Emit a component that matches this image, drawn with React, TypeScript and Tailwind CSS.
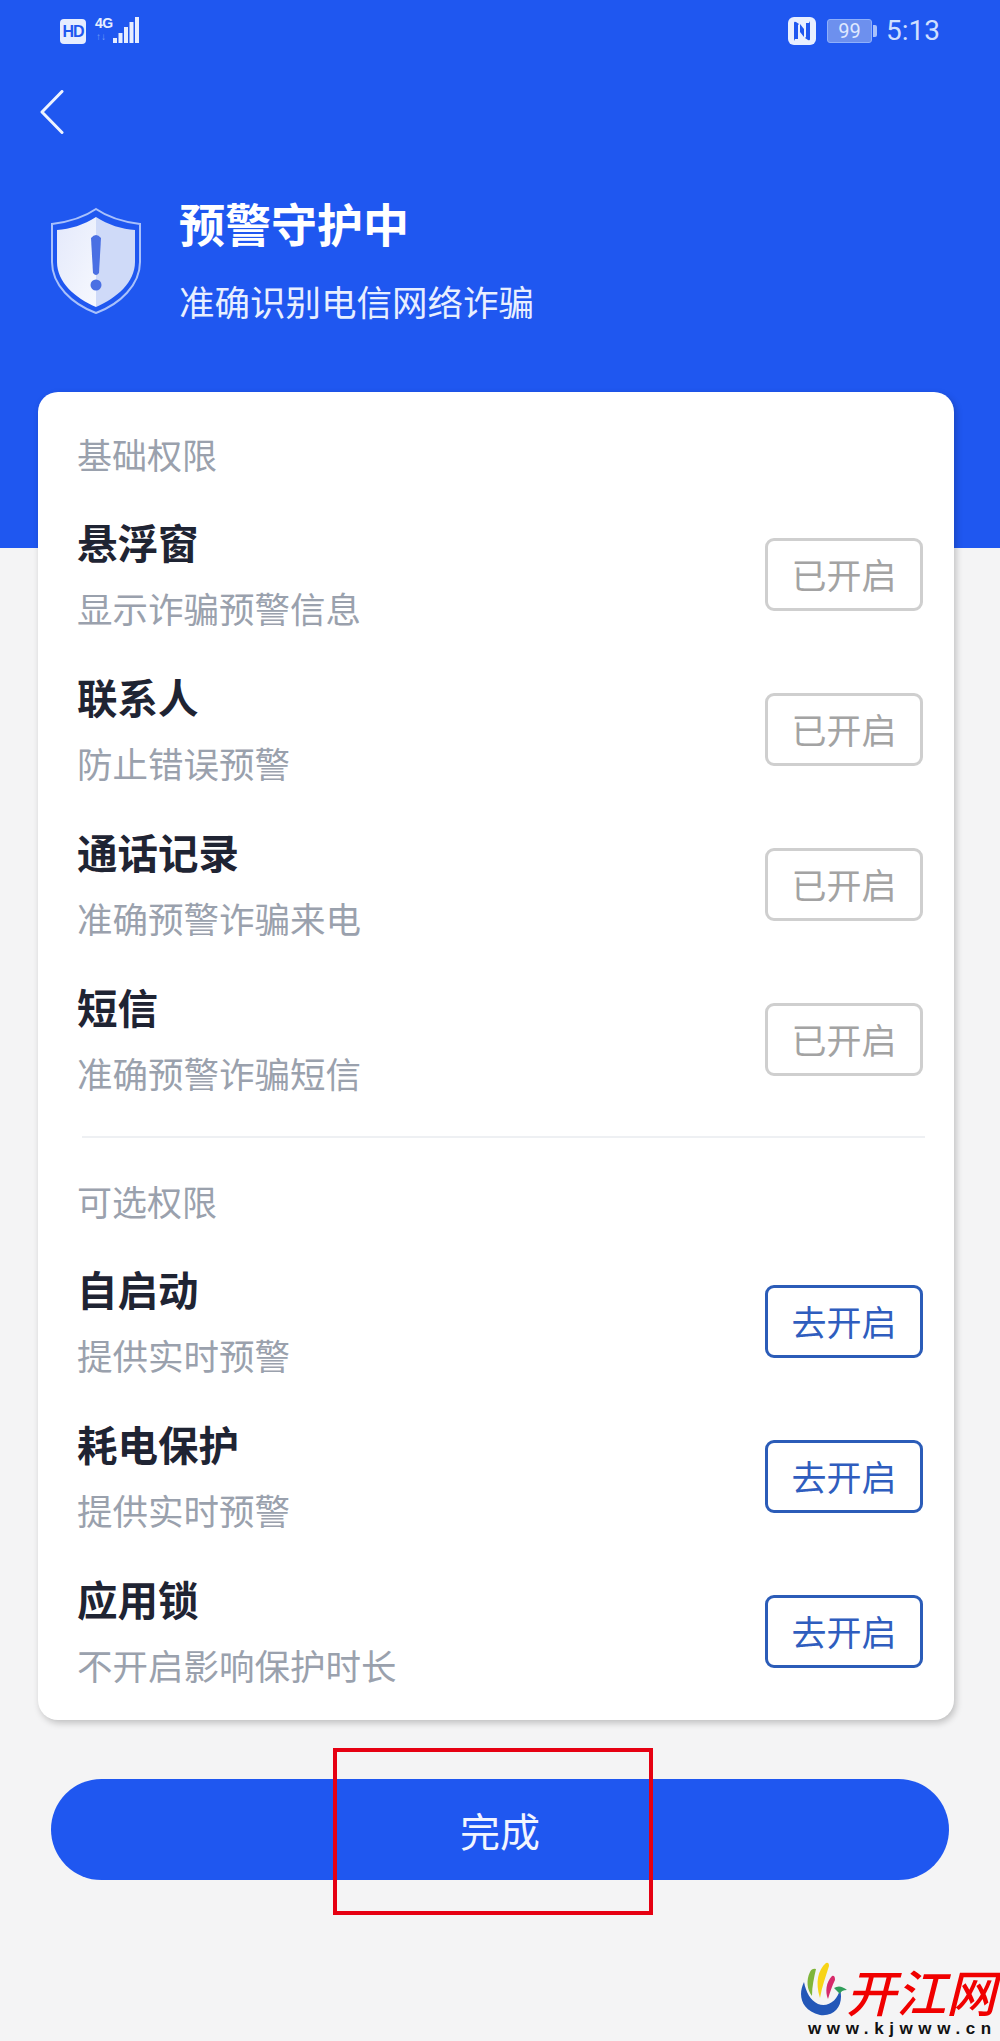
const cjk = "font-['Noto_Sans_CJK_SC','Noto_Sans',sans-serif]";

function Row({ title, sub, action, on }: { title: string; sub: string; action: string; on?: boolean }) {
  return (
    <div className="flex h-[155px] items-start justify-between">
      <div className="pt-[17px]">
        <div className="text-[40.5px] leading-[56px] font-bold text-[#1f2433]">{title}</div>
        <div className="mt-[10px] text-[35.5px] leading-[56px] text-[#9aa1ad]">{sub}</div>
      </div>
      <div
        className={
          "mt-[41px] flex h-[73px] w-[158px] items-center justify-center rounded-[9px] border-[3px] text-[35px] " +
          (on ? "border-[#cfcfcf] text-[#a3a3a3]" : "border-[#2b5cb8] text-[#2f5dbe]")
        }
      >
        {action}
      </div>
    </div>
  );
}

function Shield() {
  return (
    <svg width="92" height="108" viewBox="0 0 92 108" className="shrink-0">
      <defs>
        <linearGradient id="sl" x1="0" y1="0" x2="1" y2="1">
          <stop offset="0" stopColor="#e4e9fb" />
          <stop offset="1" stopColor="#f6f8fe" />
        </linearGradient>
      </defs>
      <path d="M46 2 C33 11 18 15 2 17 V55 C2 78 22 97 46 106 C70 97 90 78 90 55 V17 C74 15 59 11 46 2 Z" fill="none" stroke="#a9c1fb" strokeWidth="2" />
      <path d="M46 10 C34 18 20 22 7 23 V55 C7 75 25 91 46 100 Z" fill="url(#sl)" />
      <path d="M46 10 C58 18 72 22 85 23 V55 C85 75 67 91 46 100 Z" fill="#cfdaf8" />
      <path d="M41 31 Q46 25 51 31 L49 66 Q46 70 43 66 Z" fill="#4a6fe3" />
      <circle cx="46" cy="78" r="5.5" fill="#4a6fe3" />
    </svg>
  );
}

function Logo() {
  return (
    <svg width="50" height="54" viewBox="0 0 50 54">
      <path d="M6 20 C0 32 2 48 22 53 C38 55 46 42 42 27 C40 38 30 46 20 42 C12 38 8 30 6 20 Z" fill="#2357b8" />
      <path d="M12 10 C8 18 9 28 14 34 C14 24 16 16 18 7 Q14 6 12 10 Z" fill="#7fb53a" />
      <path d="M28 1 C20 8 17 20 22 36 C24 24 28 14 31 4 Q31 0 28 1 Z" fill="#f7d417" />
      <path d="M34 14 C28 20 27 30 30 37 C32 30 34 24 37 18 Q37 13 34 14 Z" fill="#d62a6a" />
      <path d="M36 26 Q42 22 49 28 Q43 28 42 32 Z" fill="#2f9e5a" />
    </svg>
  );
}

export default function App() {
  return (
    <div className={"relative h-[2041px] w-[1000px] overflow-hidden bg-[#f4f4f5] " + cjk}>
      <header className="h-[548px] bg-[#1f57f0] text-white">
        <div className="flex h-[62px] items-end justify-between pr-[60px] pl-[60px]">
          <div className="flex items-end gap-[9px] pb-[18px]">
            <div className="flex h-[25px] w-[26px] items-center justify-center rounded-[4px] bg-[#e6edff] font-['Liberation_Sans',sans-serif] text-[16px] leading-none font-bold tracking-[-1px] text-[#1f57f0]">
              HD
            </div>
            <div className="flex items-end gap-[2px]">
              <div className="relative h-[26px] w-[16px]">
                <span className="absolute top-[-2px] left-0 font-['Liberation_Sans',sans-serif] text-[14px] leading-[14px] font-bold tracking-[-0.5px] text-[#e6edff]">
                  4G
                </span>
                <span className="absolute top-[13px] left-[1px] font-['Liberation_Sans',sans-serif] text-[10px] leading-[12px] text-[#7ea0f5]">
                  ↑↓
                </span>
              </div>
              <svg width="26" height="27" viewBox="0 0 26 27">
                <rect x="0" y="21" width="4" height="5" fill="#e6edff" />
                <rect x="5.5" y="16" width="4" height="10" fill="#e6edff" />
                <rect x="11" y="10" width="4" height="16" fill="#e6edff" />
                <rect x="16.5" y="5" width="4" height="21" fill="#e6edff" />
                <rect x="22" y="0" width="4" height="26" fill="#e6edff" />
              </svg>
            </div>
          </div>
          <div className="flex items-center gap-[9px] pb-[15px]">
            <svg width="28" height="28" viewBox="0 0 28 28" className="mr-[2px]">
              <rect width="28" height="28" rx="6" fill="#e8efff" />
              <path d="M6 24 V6 Q6 4 8 5 L11 7 L10 8 V22 H7 Z M22 4 V22 Q22 24 20 23 L17 21 L18 20 V6 H21 Z" fill="#1f57f0" />
              <path d="M12 7 L16 12 V20 L12 15 Z" fill="#1f57f0" />
            </svg>
            <div className="flex items-center gap-[1px]">
              <div className="flex h-[24px] w-[45px] items-center justify-center rounded-[3px] border-[1.5px] border-[#8fb0fb] bg-[#6d90ee] font-['Roboto',sans-serif] text-[20px] leading-none text-[#dfe8ff]">
                99
              </div>
              <div className="h-[12px] w-[4px] rounded-r-[2px] bg-[#a9c1fb]" />
            </div>
            <span className="font-['Roboto',sans-serif] text-[28px] leading-[32px] text-[#cfdfff]">5:13</span>
          </div>
        </div>
        <div className="pt-[28px] pl-[40px]">
          <svg width="24" height="44" viewBox="0 0 24 44" className="block">
            <path d="M22 1.5 L2 22 L22 42.5" fill="none" stroke="#eef3ff" strokeWidth="3" strokeLinecap="round" strokeLinejoin="round" />
          </svg>
        </div>
        <div className="mt-[56px] flex items-start pl-[50px]">
          <div className="pt-[17px]">
            <Shield />
          </div>
          <div className="ml-[37px]">
            <div className="text-[46px] leading-[64px] font-bold">预警守护中</div>
            <div className="mt-[21px] text-[35.5px] leading-[52px] text-[#e8efff]">准确识别电信网络诈骗</div>
          </div>
        </div>
      </header>

      <main className="relative mx-[38px] -mt-[156px] h-[1328px] w-[916px] rounded-[20px] bg-white pt-[37px] pr-[31px] pb-[11px] pl-[39px] shadow-[2px_3px_7px_rgba(0,0,0,0.22)]">
        <div className="mb-[18px] text-[35px] leading-[50px] text-[#9aa1ad]">基础权限</div>
        <Row title="悬浮窗" sub="显示诈骗预警信息" action="已开启" on />
        <Row title="联系人" sub="防止错误预警" action="已开启" on />
        <Row title="通话记录" sub="准确预警诈骗来电" action="已开启" on />
        <Row title="短信" sub="准确预警诈骗短信" action="已开启" on />
        <div className="mt-[19px] mr-[-2px] ml-[5px] h-[2px] bg-[#eef0f3]" />
        <div className="mt-[38px] mb-[18px] text-[35px] leading-[50px] text-[#9aa1ad]">可选权限</div>
        <Row title="自启动" sub="提供实时预警" action="去开启" />
        <Row title="耗电保护" sub="提供实时预警" action="去开启" />
        <Row title="应用锁" sub="不开启影响保护时长" action="去开启" />
      </main>

      <div className="mx-[51px] mt-[59px] flex h-[101px] w-[898px] items-center justify-center rounded-full bg-[#1f57f0] text-[40px] text-[#f2f5ff]">
        完成
      </div>

      <div className="absolute top-[1748px] left-[333px] h-[167px] w-[320px] border-[4px] border-[#e60012]" />

      <div className="absolute top-[1962px] left-[798px]">
        <Logo />
      </div>
      <div className="absolute top-[1962px] left-[846px] font-['Noto_Sans_CJK_SC',serif] text-[50px] leading-[56px] font-medium whitespace-nowrap text-[#f00000] italic">
        开江网
      </div>
      <div className="absolute top-[2019px] left-[808px] whitespace-nowrap font-['Liberation_Sans',sans-serif] text-[17px] leading-[20px] font-bold tracking-[5.6px] text-[#111]">
        www.kjwww.cn
      </div>
    </div>
  );
}
